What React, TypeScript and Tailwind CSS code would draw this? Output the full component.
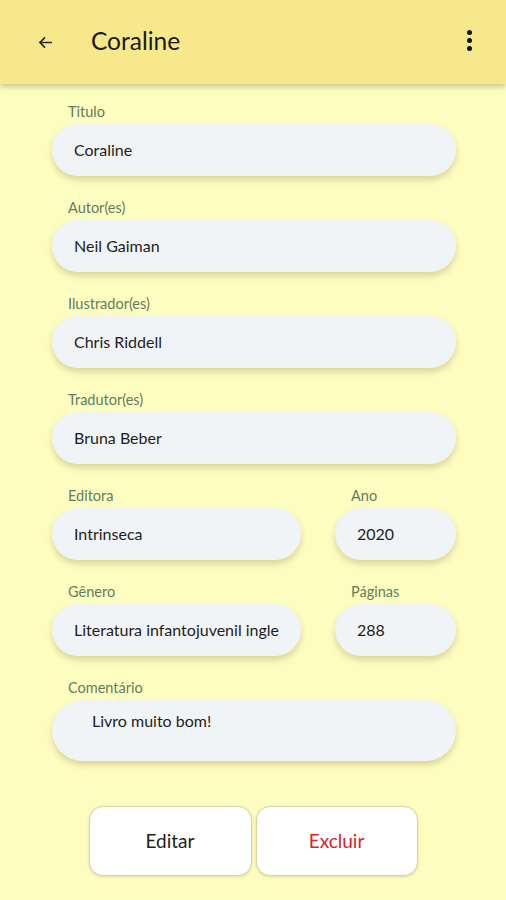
import React from "react";

const font = { fontFamily: "Lato, 'Open Sans', sans-serif" };

function Field({ label, value, className = "" }: { label: string; value: string; className?: string }) {
  return (
    <div className={`flex flex-col ${className}`}>
      <div className="h-[20px] leading-[20px] pl-[16px] text-[14.5px] text-[#5f7d62]">{label}</div>
      <div className="mt-[2px] h-[52px] rounded-full bg-[#f1f4f7] shadow-[0_4px_6px_rgba(120,120,40,0.28)] flex items-center pl-[22px] pr-[14px] text-[16px] text-[#1d1d1d]">
        <span className="block whitespace-nowrap">{value}</span>
      </div>
    </div>
  );
}

export default function App() {
  return (
    <div className="w-[506px] h-[900px] bg-[#fefdc0] flex flex-col overflow-hidden" style={font}>
      <div className="h-[84px] bg-[#f7e88b] shadow-[0_3px_5px_rgba(90,90,40,0.3)] flex items-center relative z-10">
        <svg width="15" height="13" viewBox="0 0 16 14" className="ml-[38px]">
          <path d="M15 7H2M7.5 1.5L2 7l5.5 5.5" fill="none" stroke="#2a2a2a" strokeWidth="1.8" />
        </svg>
        <div className="ml-[38px] text-[24.5px] text-[#1a1a1a] mt-[-2px]">Coraline</div>
        <div className="ml-auto mr-[34px] flex flex-col gap-[3px] mt-[-4px]">
          <div className="w-[5px] h-[5px] rounded-full bg-[#111]" />
          <div className="w-[5px] h-[5px] rounded-full bg-[#111]" />
          <div className="w-[5px] h-[5px] rounded-full bg-[#111]" />
        </div>
      </div>
      <div className="flex flex-col pl-[52px] pr-[50px] pt-[18px]">
        <Field label="Titulo" value="Coraline" />
        <Field label="Autor(es)" value="Neil Gaiman" className="mt-[22px]" />
        <Field label="Ilustrador(es)" value="Chris Riddell" className="mt-[22px]" />
        <Field label="Tradutor(es)" value="Bruna Beber" className="mt-[22px]" />
        <div className="flex gap-[34px] mt-[22px]">
          <Field label="Editora" value="Intrinseca" className="w-[249px]" />
          <Field label="Ano" value="2020" className="flex-1" />
        </div>
        <div className="flex gap-[34px] mt-[22px]">
          <Field label="Gênero" value="Literatura infantojuvenil ingle" className="w-[249px]" />
          <Field label="Páginas" value="288" className="flex-1" />
        </div>
        <div className="flex flex-col mt-[22px]">
          <div className="h-[20px] leading-[20px] pl-[16px] text-[14.5px] text-[#5f7d62]">Comentário</div>
          <div className="mt-[2px] h-[61px] rounded-full bg-[#f1f4f7] shadow-[0_4px_6px_rgba(120,120,40,0.28)] pl-[40px] pt-[9px] text-[16px] text-[#1d1d1d]">
            Livro muito bom!
          </div>
        </div>
      </div>
      <div className="flex justify-center gap-[4px] mt-[45px]">
        <button className="w-[163px] h-[70px] rounded-[14px] bg-white border border-[#d3d7a8] shadow-[0_1px_3px_rgba(120,120,40,0.25)] text-[19px] text-[#1d1d1d]">
          Editar
        </button>
        <button className="w-[162px] h-[70px] rounded-[14px] bg-white border border-[#d3d7a8] shadow-[0_1px_3px_rgba(120,120,40,0.25)] text-[19px] text-[#e0202a]">
          Excluir
        </button>
      </div>
    </div>
  );
}
